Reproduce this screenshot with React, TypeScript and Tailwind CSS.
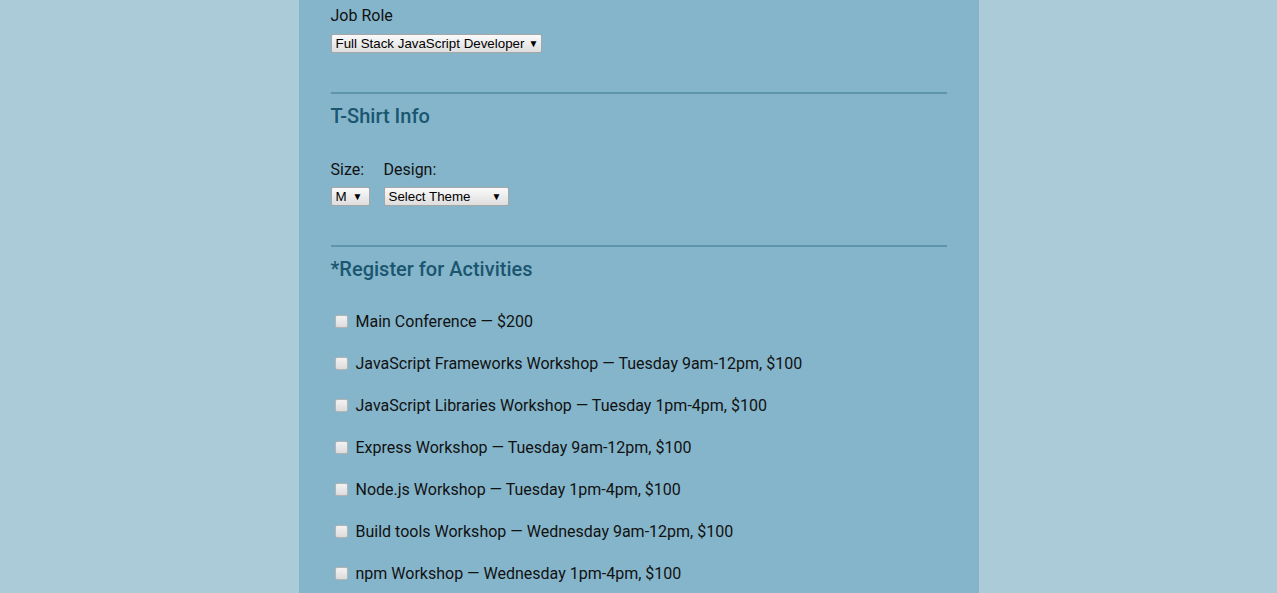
import React from "react";

const activities = [
  "Main Conference — $200",
  "JavaScript Frameworks Workshop — Tuesday 9am-12pm, $100",
  "JavaScript Libraries Workshop — Tuesday 1pm-4pm, $100",
  "Express Workshop — Tuesday 9am-12pm, $100",
  "Node.js Workshop — Tuesday 1pm-4pm, $100",
  "Build tools Workshop — Wednesday 9am-12pm, $100",
  "npm Workshop — Wednesday 1pm-4pm, $100",
];

const FakeSelect = ({ label, width }: { label: string; width: string }) => (
  <div
    className={`flex h-[19px] items-center justify-between gap-1 rounded-[2px] border border-[#a6a6a6] bg-gradient-to-b from-[#fafafa] to-[#dedede] pl-[4px] pr-[6px] text-[13.33px] leading-none text-black ${width}`}
    style={{ fontFamily: '"Liberation Sans", Arial, sans-serif' }}
  >
    <span className="whitespace-nowrap">{label}</span>
    <span className="text-[10px]">▼</span>
  </div>
);

const App: React.FC = () => {
  return (
    <div
      className="min-h-screen bg-[#abcbd8] text-[16px] text-[#111]"
      style={{ fontFamily: 'Roboto, "Open Sans", sans-serif' }}
    >
      <div className="mx-auto w-[680px] bg-[#85b5cb] px-8 pt-[4px] pb-10">
        <div className="leading-6">Job Role</div>
        <div className="mt-[6px]">
          <FakeSelect label="Full Stack JavaScript Developer" width="w-[211px]" />
        </div>

        <div className="mt-[39px] h-[2px] bg-[#5e95ad]" />
        <h2 className="mt-[8px] text-[20px] font-medium leading-7 text-[#1b5670]">
          T-Shirt Info
        </h2>

        <div className="mt-[28px] flex gap-[14px]">
          <div>
            <div className="leading-6">Size:</div>
            <div className="mt-[5px]">
              <FakeSelect label="M" width="w-[39px]" />
            </div>
          </div>
          <div>
            <div className="leading-6">Design:</div>
            <div className="mt-[5px]">
              <FakeSelect label="Select Theme" width="w-[125px]" />
            </div>
          </div>
        </div>

        <div className="mt-[39px] h-[2px] bg-[#5e95ad]" />
        <h2 className="mt-[8px] text-[20px] font-medium leading-7 text-[#1b5670]">
          *Register for Activities
        </h2>

        <div className="mt-[27px] flex flex-col gap-[18px]">
          {activities.map((a) => (
            <label key={a} className="flex items-center leading-6">
              <span className="relative -top-[1px] ml-[4px] mr-[8px] h-[13px] w-[13px] rounded-[2px] border border-[#b4b4b4] bg-gradient-to-b from-[#f2f2f2] to-[#dcdcdc]" />
              <span>{a}</span>
            </label>
          ))}
        </div>
      </div>
    </div>
  );
};

export default App;
